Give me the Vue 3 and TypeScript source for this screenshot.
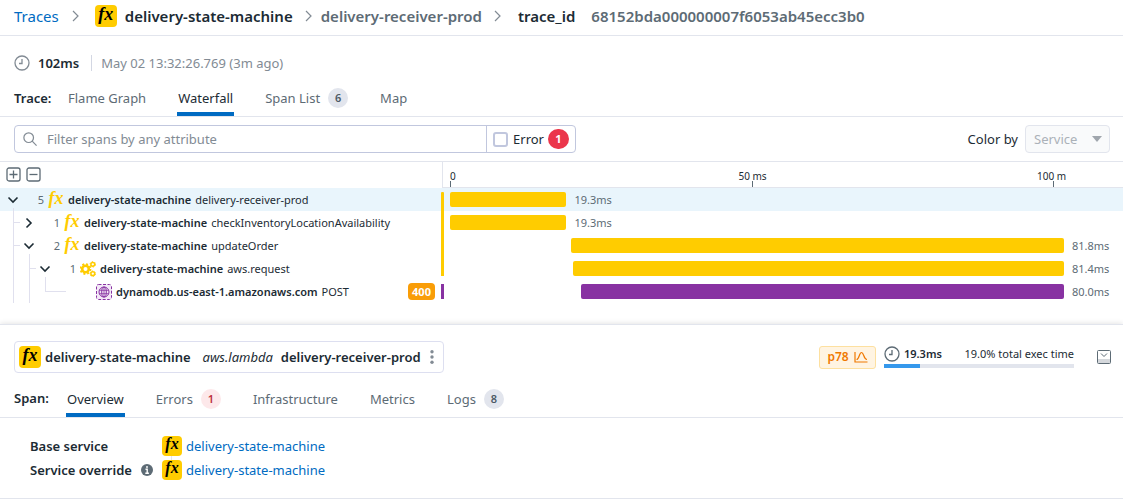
<script setup lang="ts">
import { ref } from 'vue'

type Guide = 'line' | 'tee' | 'elbow'
type Kind = 'lambda' | 'custom' | 'web'

interface Span {
  id: number
  guides: Guide[]
  toggle?: 'open' | 'closed'
  count?: number
  kind: Kind
  service: string
  resource: string
  start: number
  duration: number
  status?: number
  edge: 'first' | 'middle' | 'last' | 'only'
}

interface Tab {
  label: string
  count?: number
  alert?: boolean
}

const totalMs = 101.8
const service = 'delivery-state-machine'

const spans: Span[] = [
  { id: 1, guides: [], toggle: 'open', count: 5, kind: 'lambda', service, resource: 'delivery-receiver-prod', start: 0, duration: 19.3, edge: 'first' },
  { id: 2, guides: ['tee'], toggle: 'closed', count: 1, kind: 'lambda', service, resource: 'checkInventoryLocationAvailability', start: 0, duration: 19.3, edge: 'middle' },
  { id: 3, guides: ['tee'], toggle: 'open', count: 2, kind: 'lambda', service, resource: 'updateOrder', start: 20, duration: 81.8, edge: 'middle' },
  { id: 4, guides: ['line', 'tee'], toggle: 'open', count: 1, kind: 'custom', service, resource: 'aws.request', start: 20.4, duration: 81.4, edge: 'last' },
  { id: 5, guides: ['line', 'line', 'elbow'], kind: 'web', service: 'dynamodb.us-east-1.amazonaws.com', resource: 'POST', start: 21.8, duration: 80, status: 400, edge: 'only' },
]

const ticks = [
  { at: 0, label: '0', place: 'zero' },
  { at: 50, label: '50 ms', place: 'mid' },
  { at: 100, label: '100 m', place: 'end' },
]

const traceTabs: Tab[] = [{ label: 'Flame Graph' }, { label: 'Waterfall' }, { label: 'Span List', count: 6 }, { label: 'Map' }]
const spanTabs: Tab[] = [
  { label: 'Overview' },
  { label: 'Errors', count: 1, alert: true },
  { label: 'Infrastructure' },
  { label: 'Metrics' },
  { label: 'Logs', count: 8 },
]

const traceTab = ref('Waterfall')
const spanTab = ref('Overview')
const selected = ref(1)
const query = ref('')
const errorOnly = ref(false)
const share = ref(19)

const pct = (ms: number) => `${(ms / totalMs) * 100}%`
</script>

<template>
  <div class="page">
    <header class="crumbs">
      <a href="#traces">Traces</a>
      <svg class="sep" viewBox="0 0 8 12" aria-hidden="true"><path d="M1 1 6 6l-5 5" /></svg>
      <span class="fx big">fx</span>
      <strong>{{ service }}</strong>
      <svg class="sep near" viewBox="0 0 8 12" aria-hidden="true"><path d="M1 1 6 6l-5 5" /></svg>
      <span class="muted">delivery-receiver-prod</span>
      <svg class="sep mid" viewBox="0 0 8 12" aria-hidden="true"><path d="M1 1 6 6l-5 5" /></svg>
      <strong>trace_id</strong>
      <span class="muted hash">68152bda000000007f6053ab45ecc3b0</span>
    </header>

    <div class="meta">
      <svg class="clock" viewBox="0 0 16 16" aria-hidden="true"><circle cx="8" cy="8" r="7" /><path d="M8 4v4.500H5" /></svg>
      <strong>102ms</strong>
      <time>May 02 13:32:26.769 (3m ago)</time>
    </div>

    <nav class="tabs trace-tabs">
      <strong>Trace:</strong>
      <button v-for="t in traceTabs" :key="t.label" type="button" :class="{ on: t.label === traceTab }" @click="traceTab = t.label">
        {{ t.label }}<span v-if="t.count" class="pill">{{ t.count }}</span>
      </button>
    </nav>

    <div class="filters">
      <div class="search">
        <svg class="lens" viewBox="0 0 16 16" aria-hidden="true"><circle cx="6.500" cy="6.500" r="5.500" /><path d="m10.500 10.500 5 5" /></svg>
        <input v-model="query" type="text" placeholder="Filter spans by any attribute" aria-label="Filter spans" />
        <label class="error">
          <input v-model="errorOnly" type="checkbox" />
          <span>Error</span>
          <b>1</b>
        </label>
      </div>
      <label class="color-by" for="color-by">Color by</label>
      <div class="select">
        <select id="color-by" disabled><option>Service</option></select>
        <svg viewBox="0 0 10 6" aria-hidden="true"><path d="M0 0h10L5 6z" /></svg>
      </div>
    </div>

    <section class="waterfall">
      <div class="axis">
        <div class="axis-left">
          <button type="button" aria-label="Expand all">
            <svg viewBox="0 0 15 15"><rect x="1" y="1" width="13" height="13" rx="2" /><path d="M7.500 3.500v8M3.500 7.500h8" /></svg>
          </button>
          <button type="button" aria-label="Collapse all">
            <svg viewBox="0 0 15 15"><rect x="1" y="1" width="13" height="13" rx="2" /><path d="M3.500 7.500h8" /></svg>
          </button>
        </div>
        <div class="axis-right">
          <div class="scale">
            <div v-for="t in ticks" :key="t.at" class="tick" :class="t.place" :style="{ left: pct(t.at) }">
              <span>{{ t.label }}</span>
            </div>
          </div>
        </div>
      </div>

      <div v-for="s in spans" :key="s.id" class="row" :class="[s.edge, s.kind, { selected: s.id === selected }]" @click="selected = s.id">
        <div class="tree">
          <i v-for="(g, i) in s.guides" :key="i" class="guide" :class="g"></i>
          <button v-if="s.toggle" type="button" class="toggle" :class="s.toggle" aria-label="Toggle children">
            <svg viewBox="0 0 12 12"><path d="m1.500 3.500 4.500 4.500 4.500-4.500" /></svg>
          </button>
          <span v-else class="toggle"></span>
          <span class="count">{{ s.count }}</span>
          <span v-if="s.kind === 'lambda'" class="fx bare">fx</span>
          <svg v-else-if="s.kind === 'custom'" class="kind" viewBox="0 0 16 16" aria-hidden="true">
            <circle cx="5.500" cy="8" r="3.300" fill="none" stroke="#ffcc00" stroke-width="2.600" />
            <circle cx="5.500" cy="8" r="5" fill="none" stroke="#ffcc00" stroke-width="1.800" stroke-dasharray="2 1.927" />
            <circle cx="12.800" cy="3.300" r="1.900" fill="none" stroke="#ffcc00" stroke-width="1.500" />
            <circle cx="12.800" cy="3.300" r="2.700" fill="none" stroke="#ffcc00" stroke-width="1" stroke-dasharray="1.400 1.427" />
            <circle cx="12.800" cy="12.700" r="1.900" fill="none" stroke="#ffcc00" stroke-width="1.500" />
            <circle cx="12.800" cy="12.700" r="2.700" fill="none" stroke="#ffcc00" stroke-width="1" stroke-dasharray="1.400 1.427" />
          </svg>
          <svg v-else class="kind" viewBox="0 0 16 16" aria-hidden="true">
            <rect x=".5" y=".5" width="15" height="15" rx="2" fill="#f3e8f7" stroke="#8832a2" stroke-dasharray="3 1.500" />
            <g fill="none" stroke="#8832a2"><circle cx="8" cy="8" r="5" /><ellipse cx="8" cy="8" rx="2.300" ry="5" /><path d="M3.300 6.300h9.400M3.300 9.700h9.400M8 3v10" stroke-width=".8" /></g>
          </svg>
          <strong>{{ s.service }}</strong>
          <span class="resource">{{ s.resource }}</span>
          <em v-if="s.status" class="status">{{ s.status }}</em>
        </div>
        <i class="strip"></i>
        <div class="lane">
          <div class="track">
            <div class="bar" :style="{ marginLeft: pct(s.start), width: pct(s.duration) }"></div>
            <span>{{ s.duration.toFixed(1) }}ms</span>
          </div>
        </div>
      </div>
    </section>

    <section class="detail">
      <div class="head">
        <div class="title">
          <span class="fx big">fx</span>
          <strong>{{ service }}</strong>
          <em>aws.lambda</em>
          <strong>delivery-receiver-prod</strong>
          <button type="button" aria-label="More actions">
            <svg viewBox="0 0 4 16"><circle cx="2" cy="2.700" r="1.700" /><circle cx="2" cy="8" r="1.700" /><circle cx="2" cy="13.300" r="1.700" /></svg>
          </button>
        </div>
        <button type="button" class="percentile">
          p78
          <svg viewBox="0 0 14 12" aria-hidden="true"><path d="M1 1v10h12.500M2.500 8.500c3 0 2.500-7 5-7s2 7 5.500 7" /></svg>
        </button>
        <div class="exec">
          <div class="exec-text">
            <svg class="clock" viewBox="0 0 16 16" aria-hidden="true"><circle cx="8" cy="8" r="7" /><path d="M8 4v4.500H5" /></svg>
            <strong>19.3ms</strong>
            <span>19.0% total exec time</span>
          </div>
          <div class="meter"><div :style="{ width: share + '%' }"></div></div>
        </div>
        <button type="button" class="dock" aria-label="Collapse panel">
          <svg viewBox="0 0 14 14"><path class="shade" d="M1 9h12v4H1z" /><rect x=".5" y=".5" width="13" height="13" rx="1" /><path d="m4 3.500 3 3 3-3" /></svg>
        </button>
      </div>

      <nav class="tabs span-tabs">
        <strong>Span:</strong>
        <button v-for="t in spanTabs" :key="t.label" type="button" :class="{ on: t.label === spanTab }" @click="spanTab = t.label">
          {{ t.label }}<span v-if="t.count" class="pill" :class="{ alert: t.alert }">{{ t.count }}</span>
        </button>
      </nav>

      <dl class="facts">
        <dt>Base service</dt>
        <dd class="linked"><span class="fx">fx</span><a href="#service">{{ service }}</a></dd>
        <dt>
          Service override
          <svg viewBox="0 0 12 12" aria-hidden="true"><circle cx="6" cy="6" r="6" /><path d="M6 2v2M4.500 5.300h1.700v3.500M4.300 9.300h3.600" /></svg>
        </dt>
        <dd><span class="fx">fx</span><a href="#service">{{ service }}</a></dd>
      </dl>
    </section>
  </div>
</template>

<style>
body {
  margin: 0;
  background: #fff;
}
</style>

<style scoped>
.page {
  font: 13px/20px 'Noto Sans', 'Open Sans', sans-serif;
  color: #1c2b34;
  overflow: hidden;
}
.page * {
  box-sizing: border-box;
}
strong {
  font-weight: 600;
}
button {
  font: inherit;
  color: inherit;
  background: none;
  border: 0;
  padding: 0;
  cursor: pointer;
}
a {
  color: #006bc2;
  text-decoration: none;
}
svg {
  flex: none;
  fill: none;
}

.fx {
  flex: none;
  display: inline-flex;
  align-items: center;
  justify-content: center;
  width: 20px;
  height: 20px;
  border-radius: 4px;
  background: #fc0;
  color: #000;
  font: italic bold 16px/16px 'Liberation Serif', serif;
  padding-bottom: 4px;
}
.fx.big {
  width: 22px;
  height: 22px;
  font-size: 18px;
}
.fx.bare {
  width: 16px;
  height: 16px;
  background: none;
  color: #fc0;
  font-size: 18px;
}

.crumbs {
  display: flex;
  align-items: center;
  height: 36px;
  padding: 0 14px 3px;
  border-bottom: 1px solid #e2e5ed;
  font-size: 15px;
  white-space: nowrap;
}
.crumbs .fx {
  margin-right: 8px;
}
.crumbs .muted {
  color: #5d6b75;
  font-weight: 600;
}
.crumbs .hash {
  margin-left: 16px;
}
.sep {
  width: 8px;
  height: 12px;
  margin: 0 15px 0 13px;
  stroke: #828b94;
  stroke-width: 1.2;
}
.sep.near {
  margin: 0 8px 0 12px;
}
.sep.mid {
  margin: 0 16px 0 12px;
}

.meta {
  display: flex;
  align-items: center;
  padding: 17px 14px 0;
}
.clock {
  width: 16px;
  height: 16px;
  stroke: #828b94;
  stroke-width: 1.3;
}
.meta strong {
  margin: 0 12px 0 8px;
}
.meta time {
  line-height: 16px;
  padding-left: 9px;
  border-left: 1px solid #d3d7e3;
  color: #828b94;
}

.tabs {
  display: flex;
  align-items: stretch;
  height: 36px;
  padding: 0 14px;
  border-bottom: 1px solid #e2e5ed;
}
.tabs strong {
  width: 52px;
  line-height: 35px;
}
.tabs button {
  display: flex;
  align-items: center;
  padding: 4px 1px 0;
  margin-right: 30px;
  border-bottom: 4px solid transparent;
  color: #5d6b75;
}
.tabs .on {
  color: #1c2b34;
  border-color: #006bc2;
}
.trace-tabs {
  margin-top: 8px;
}
.trace-tabs strong {
  width: 53px;
}
.trace-tabs button {
  padding-top: 2px;
}
.span-tabs {
  height: 37px;
}
.pill {
  width: 20px;
  height: 20px;
  margin-left: 8px;
  border-radius: 10px;
  background: #e2e5ed;
  color: #4b5864;
  font-size: 11px;
  font-weight: 600;
  text-align: center;
}
.pill.alert {
  background: #fde8ea;
  color: #bc303c;
}

.filters {
  display: flex;
  align-items: center;
  padding: 8px 13px 8px 14px;
  border-bottom: 1px solid #e2e5ed;
}
.search {
  display: flex;
  align-items: center;
  flex: 0 1 562px;
  height: 28px;
  border: 1px solid #c1c7de;
  border-radius: 4px;
}
.lens {
  width: 14px;
  height: 14px;
  margin: 0 10px 0 8px;
  stroke: #828b94;
  stroke-width: 1.4;
}
.search input[type='text'] {
  flex: 1;
  min-width: 0;
  height: 26px;
  padding: 0;
  border: 0;
  outline: 0;
  background: none;
  font: inherit;
  color: inherit;
}
.search input::placeholder {
  color: #828b94;
  opacity: 1;
}
.error {
  display: flex;
  align-items: center;
  height: 26px;
  padding: 0 6px;
  border-left: 1px solid #c1c7de;
}
.error input {
  appearance: none;
  width: 15px;
  height: 15px;
  margin: 0 5px 0 0;
  border: 2px solid #c1c7de;
  border-radius: 3px;
}
.error input:checked {
  background: #006bc2;
}
.error b {
  width: 21px;
  height: 20px;
  margin-left: 4px;
  border-radius: 10px;
  background: #eb364b;
  color: #fff;
  font-size: 11px;
  text-align: center;
}
.color-by {
  margin: 0 7px 0 auto;
}
.select {
  display: grid;
  align-items: center;
  width: 85px;
}
.select > * {
  grid-area: 1 / 1;
}
.select select {
  appearance: none;
  width: 100%;
  height: 28px;
  padding: 0 8px;
  border: 1px solid #e2e5ed;
  border-radius: 4px;
  background: #f9fafb;
  font: inherit;
  color: #abb1b8;
  opacity: 1;
}
.select svg {
  justify-self: end;
  width: 10px;
  height: 6px;
  margin-right: 8px;
  fill: #a0a6ad;
}

.waterfall {
  font-size: 11px;
  padding-bottom: 21px;
}
.axis {
  display: flex;
  height: 26px;
}
.axis-left {
  display: flex;
  align-items: center;
  gap: 5px;
  flex: none;
  width: 442px;
  padding: 0 0 2px 6px;
}
.axis-left button,
.axis-left svg {
  display: block;
  width: 15px;
  height: 15px;
}
.axis-left svg {
  stroke: #5d6b75;
  stroke-width: 1.3;
}
.axis-right {
  flex: 1;
  padding: 0 59px 0 7px;
  border-left: 1px solid #e2e5ed;
  border-bottom: 1px solid #e2e5ed;
}
.scale {
  position: relative;
  height: 25px;
}
.tick {
  position: absolute;
  bottom: 0;
  height: 6px;
  border-left: 1px solid #5d6b75;
}
.tick span {
  position: absolute;
  bottom: 5px;
  line-height: 12px;
  font-size: 10px;
  white-space: nowrap;
}
.tick.zero span {
  left: -1px;
}
.tick.mid span {
  left: 0;
  transform: translateX(-50%);
}
.tick.end span {
  right: -12px;
}

.row {
  display: flex;
  height: 23px;
}
.row.selected {
  background: #e9f5fc;
}
.tree {
  display: flex;
  align-items: center;
  flex: none;
  width: 441px;
  padding: 0 6px 0 5px;
  white-space: nowrap;
}
.guide,
.toggle {
  position: relative;
  flex: none;
  width: 16px;
  height: 23px;
}
.guide::before,
.toggle.open::after {
  content: '';
  position: absolute;
  top: 0;
  bottom: 0;
  left: 8px;
  border-left: 1px solid #e0e0ee;
}
.toggle.open::after {
  top: 20px;
}
.guide.elbow::before {
  bottom: 11px;
}
.guide.tee::after,
.guide.elbow::after {
  content: '';
  position: absolute;
  top: 11px;
  left: 8px;
  width: 7px;
  border-top: 1px solid #e0e0ee;
}
.guide.elbow::after {
  width: 21px;
}
.toggle svg {
  display: block;
  width: 12px;
  height: 12px;
  margin: 0 2px;
  stroke: #1c2b34;
  stroke-width: 1.6;
}
.toggle.closed svg {
  transform: rotate(-90deg);
}
.count {
  width: 23px;
  margin-right: 4px;
  text-align: right;
  color: #5d6b75;
}
.kind {
  width: 16px;
  height: 16px;
}
.tree strong {
  margin: 0 4px;
}
.status {
  margin-left: auto;
  width: 27px;
  border-radius: 4px;
  background: #f99d07;
  color: #fff;
  font-style: normal;
  font-weight: 700;
  line-height: 17px;
  text-align: center;
}
.strip {
  flex: none;
  width: 3px;
  background: #fc0;
}
.first .strip {
  margin-top: 4px;
  border-radius: 1px 1px 0 0;
}
.last .strip {
  margin-bottom: 4px;
}
.only .strip {
  margin: 4px 0;
}
.lane {
  flex: 1;
  padding: 0 59px 0 6px;
}
.track {
  display: flex;
  align-items: center;
  height: 23px;
}
.bar {
  flex: none;
  height: 15px;
  border-radius: 2px;
  background: #fc0;
}
.web .bar,
.web .strip {
  background: #8832a2;
}
.track span {
  margin-left: 8px;
  color: #5d6b75;
}

.detail {
  border-top: 1px solid #e2e5ed;
  border-bottom: 1px solid #e2e5ed;
  box-shadow: 0 -1px 5px rgba(0, 0, 0, 0.1);
}
.head {
  display: flex;
  align-items: center;
  padding: 16px 12px 8px 14px;
  white-space: nowrap;
}
.title {
  display: flex;
  align-items: center;
  height: 32px;
  padding: 0 9px 0 4px;
  margin-right: auto;
  border: 1px solid #dddff0;
  border-radius: 4px;
}
.title strong {
  margin-left: 4px;
}
.title em {
  margin: 0 4px 0 12px;
}
.title button,
.title svg {
  display: block;
  width: 4px;
  height: 16px;
}
.title button {
  margin-left: 9px;
}
.title svg {
  fill: #828b94;
}
.percentile {
  display: flex;
  align-items: center;
  justify-content: center;
  gap: 5px;
  width: 57px;
  height: 23px;
  border: 1px solid #fde0a0;
  border-radius: 3px;
  background: #fff4e2;
  color: #f07800;
  font-size: 12px;
  font-weight: 600;
}
.percentile svg {
  width: 14px;
  height: 12px;
  stroke: #f07800;
  stroke-width: 1.2;
}
.exec {
  width: 190px;
  margin: 0 23px 0 8px;
  font-size: 11px;
}
.exec-text {
  display: flex;
  align-items: center;
  line-height: 16px;
}
.exec-text strong {
  margin: 0 auto 0 4px;
}
.exec-text .clock {
  stroke: #5d6b75;
}
.meter {
  height: 4px;
  margin-top: 2px;
  background: #e2e5ed;
}
.meter div {
  height: 4px;
  background: #3598ec;
}
.dock,
.dock svg {
  display: block;
  width: 14px;
  height: 14px;
}
.dock svg {
  stroke: #5d6b75;
}
.dock .shade {
  fill: #d5d8dc;
  stroke: none;
}

.facts {
  display: grid;
  grid-template-columns: 132px 1fr;
  row-gap: 4px;
  margin: 0;
  padding: 18px 30px;
}
.facts dt,
.facts dd {
  display: flex;
  align-items: center;
  margin: 0;
  font-weight: 600;
}
.facts dt svg {
  width: 12px;
  height: 12px;
  margin-left: 9px;
  fill: #5d6b75;
}
.facts dt path {
  stroke: #fff;
  stroke-width: 1.4;
}
.facts dd {
  position: relative;
  font-weight: 400;
}
.facts dd a {
  margin-left: 4px;
}
.facts .linked::after {
  content: '';
  position: absolute;
  top: 20px;
  left: 9px;
  height: 4px;
  border-left: 1px solid #e2e5ed;
}
</style>
